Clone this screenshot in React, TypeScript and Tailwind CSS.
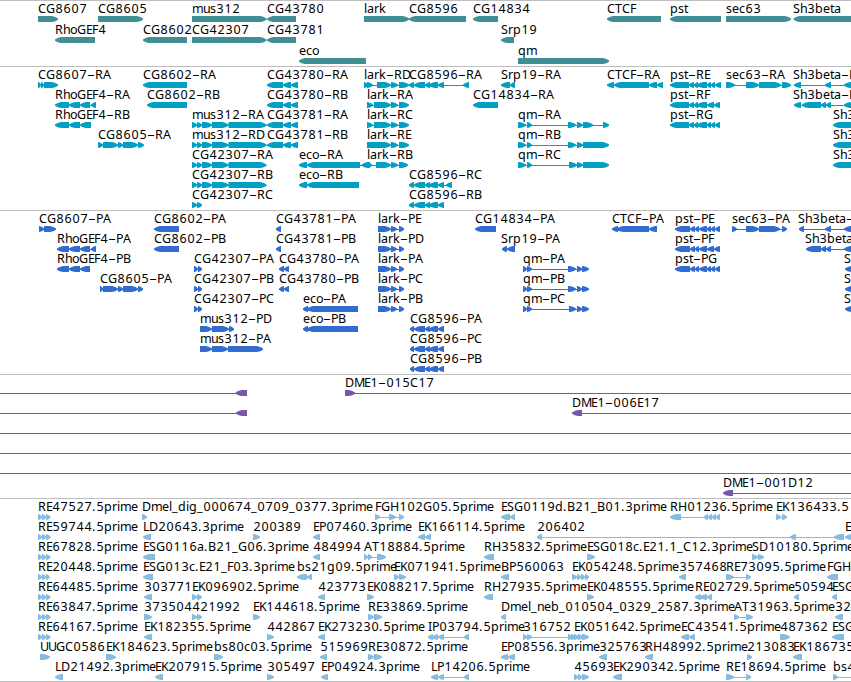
type Dir = '<' | '>';

// [label, label x, strand, exon bounds (start, end, start, end...), line start, line end]
type Feature = [string, number, Dir, number[], number?, number?];

interface TrackData {
    name: string;
    tall?: boolean;
    color: string;
    rows: Feature[][];
}

const VIEW_WIDTH = 851;

const rhoLong = [55, 69, 69, 80, 80, 90, 91, 96];
const cg43780 = [267, 283, 283, 291, 291, 298];
const mus = [192, 197, 197, 202, 202, 212, 212, 228.5, 228.5, 266.5];
const larkTail = [391, 398, 399, 409];
const cg8596 = [409, 414, 414, 425, 425, 430, 429, 438, 438, 444];
const pst = [670, 689, 689, 694, 694, 698, 697, 707, 707, 711, 711, 715, 715, 721];
const pstP = [675, 690, 690, 695, 695, 699, 699, 707, 707, 711, 711, 715, 715, 720];
const larkP = [378, 391, 391, 397, 399, 404];
const cg8596P = [410, 414, 414, 425, 425, 430, 429, 438, 438, 444];
const qmP = [523, 527, 527, 532, 568, 576, 577, 582, 582, 589];
const cg8605 = [103, 118, 118, 123, 123, 138];
const cap = [38, 42, 42, 46, 46, 50.5];

const tracks: TrackData[] = [
    {
        name: 'gene',
        tall: true,
        color: '#3f8f95',
        rows: [
            [
                ['CG8607', 38, '>', [38, 58]],
                ['CG8605', 98, '>', [98, 143]],
                ['mus312', 192, '>', [192, 266.5]],
                ['CG43780', 267, '<', [267, 296]],
                ['lark', 364, '>', [364, 409]],
                ['CG8596', 409, '<', [409, 466]],
                ['CG14834', 473, '<', [473, 498]],
                ['CTCF', 607, '<', [607, 661]],
                ['pst', 670, '<', [670, 721]],
                ['sec63', 726, '>', [726, 791]],
                ['Sh3beta', 793, '<', [793.5, 860]],
            ],
            [
                ['RhoGEF4', 55, '<', [55, 95]],
                ['CG8602', 143, '<', [143, 187]],
                ['CG42307', 192, '>', [192, 266.5]],
                ['CG43781', 267, '<', [267, 296]],
                ['Srp19', 501, '<', [501, 514]],
            ],
            [
                ['eco', 299, '<', [299, 366]],
                ['qm', 518, '>', [518, 609]],
            ],
        ],
    },
    {
        name: 'transcript',
        color: '#009fc3',
        rows: [
            [
                ['CG8607-RA', 38, '>', [38, 41, 41, 44, 44, 58]],
                ['CG8602-RA', 143, '<', [143, 187]],
                ['CG43780-RA', 267, '<', cg43780],
                ['lark-RD', 364, '>', [364, 368, 367, 373, 377, 391, ...larkTail]],
                ['CG8596-RA', 409, '<', [...cg8596, 463, 469]],
                ['Srp19-RA', 501, '<', [501, 510, 510, 515]],
                ['CTCF-RA', 607, '<', [607, 614, 614, 649, 649, 657, 657, 663]],
                ['pst-RE', 670, '<', pst],
                ['sec63-RA', 726, '>', [726, 735, 746, 759, 759, 781, 782, 791]],
                ['Sh3beta-R', 793, '<', [794, 801, 825, 831, 844, 860]],
            ],
            [
                ['RhoGEF4-RA', 55, '<', rhoLong],
                ['CG8602-RB', 147, '<', [147, 187]],
                ['CG43780-RB', 267, '<', cg43780],
                ['lark-RA', 367, '>', [367, 373, 374, 391, ...larkTail]],
                ['CG14834-RA', 473, '<', [473, 498]],
                ['pst-RF', 670, '<', [670, 689, 689, 694, 694, 698, 697, 707, 707, 714, 714, 720]],
                ['Sh3beta-R', 793, '<', [794, 801, 802, 821, 821, 826, 826, 831, 844, 860]],
            ],
            [
                ['RhoGEF4-RB', 55, '<', [55, 69, 69, 80, 80, 91]],
                ['mus312-RA', 192, '>', mus],
                ['CG43781-RA', 267, '<', cg43780],
                ['lark-RC', 367, '>', [367, 373, 374, 391, ...larkTail]],
                ['qm-RA', 518, '>', [518, 526, 527, 532, 568, 576, 577, 583, 583, 593, 603, 609]],
                ['pst-RG', 670, '<', [...pst.slice(0, -1), 720]],
                ['Sh3', 833, '<', [833, 860]],
            ],
            [
                ['CG8605-RA', 98, '>', [98, 103, ...cg8605, 138, 144]],
                ['mus312-RD', 192, '>', mus],
                ['CG43781-RB', 267, '<', cg43780],
                ['lark-RE', 367, '>', [367, 391, ...larkTail]],
                ['qm-RB', 518, '>', [518, 526, 527, 532, 568, 576, 577, 583, 583, 609]],
                ['Sh3', 833, '<', [833, 860]],
            ],
            [
                ['CG42307-RA', 192, '>', mus],
                ['eco-RA', 299, '<', [299, 307, 307, 360, 361.5, 370]],
                ['lark-RB', 367, '>', [367, 372, 376, 391, 391, 398, 399, 408]],
                ['qm-RC', 518, '>', [518, 526, 527, 532, 569, 577, 577, 583, 583, 609]],
                ['Sh3', 833, '<', [833, 860]],
            ],
            [
                ['CG42307-RB', 192, '>', mus],
                ['eco-RB', 299, '<', [299, 307, 307, 359]],
                ['CG8596-RC', 409, '<', [...cg8596, 446, 452]],
            ],
            [
                ['CG42307-RC', 192, '>', [192, 197, 197, 202]],
                ['CG8596-RB', 409, '<', cg8596],
            ],
        ],
    },
    {
        name: 'protein',
        color: '#316cce',
        rows: [
            [
                ['CG8607-PA', 39, '>', [39, 44, 44, 56]],
                ['CG8602-PA', 154, '<', [154, 179]],
                ['CG43781-PA', 276, '<', [276, 281]],
                ['lark-PE', 378, '>', larkP],
                ['CG14834-PA', 475, '<', [475, 496]],
                ['CTCF-PA', 612, '<', [612, 618, 617, 649, 649, 657]],
                ['pst-PE', 675, '<', pstP],
                ['sec63-PA', 732, '>', [732, 737, 746, 759, 759, 780, 782, 787]],
                ['Sh3beta-', 798, '<', [799, 804, 825, 831, 844, 860]],
            ],
            [
                ['RhoGEF4-PA', 57, '<', [57, 69, 69, 80, 80, 90, 91, 96]],
                ['CG8602-PB', 154, '<', [154, 179]],
                ['CG43781-PB', 276, '<', [276, 281]],
                ['lark-PD', 378, '>', larkP],
                ['Srp19-PA', 501, '<', [502, 507, 507, 515]],
                ['pst-PF', 675, '<', [675, 690, 690, 695, 695, 699, 699, 707, 707, 714, 714, 720]],
                ['Sh3beta', 805, '<', [806, 821, 821, 826, 826, 831, 844, 860]],
            ],
            [
                ['RhoGEF4-PB', 57, '<', [57, 69, 69, 80, 80, 90]],
                ['CG42307-PA', 194, '>', [194, 198, 198, 202]],
                ['CG43780-PA', 279, '<', [279, 284, 284, 289]],
                ['lark-PA', 378, '>', larkP],
                ['qm-PA', 523, '>', qmP],
                ['pst-PG', 675, '<', pstP],
                ['S', 844, '<', [845, 860]],
            ],
            [
                ['CG8605-PA', 100, '>', [100, 103, ...cg8605, 138, 143]],
                ['CG42307-PB', 194, '>', [194, 198, 198, 202]],
                ['CG43780-PB', 279, '<', [279, 284, 284, 289]],
                ['lark-PC', 378, '>', larkP],
                ['qm-PB', 523, '>', qmP],
                ['S', 844, '<', [845, 860]],
            ],
            [
                ['CG42307-PC', 194, '>', [194, 198, 198, 202]],
                ['eco-PA', 303, '<', [303, 308, 307, 358]],
                ['lark-PB', 378, '>', larkP],
                ['qm-PC', 523, '>', [523, 527, 527, 532, 569, 576, 577, 582, 582, 589]],
                ['S', 844, '<', [845, 860]],
            ],
            [
                ['mus312-PD', 200, '>', [200, 212, 212, 229, 229, 234]],
                ['eco-PB', 303, '<', [303, 308, 307, 358]],
                ['CG8596-PA', 410, '<', cg8596P],
            ],
            [
                ['mus312-PA', 200, '>', [200, 212, 212, 228, 228, 263]],
                ['CG8596-PC', 410, '<', cg8596P],
            ],
            [['CG8596-PB', 410, '<', cg8596P]],
        ],
    },
    {
        name: 'clone',
        color: '#7559a6',
        rows: [
            [
                ['', 0, '<', [235.5, 247], 0, 247],
                ['DME1-015C17', 345, '>', [345, 355], 345, VIEW_WIDTH],
            ],
            [
                ['', 0, '<', [236, 247], 0, 247],
                ['DME1-006E17', 572, '<', [572, 582], 572, VIEW_WIDTH],
            ],
            [['', 0, '<', [], 0, VIEW_WIDTH]],
            [['', 0, '<', [], 0, VIEW_WIDTH]],
            [['', 0, '<', [], 0, VIEW_WIDTH]],
            [['DME1-001D12', 723, '<', [723, 733], 723, VIEW_WIDTH]],
        ],
    },
    {
        name: 'est',
        color: '#87bcde',
        rows: [
            [
                ['RE47527.5prime', 38, '>', cap],
                ['Dmel_dig_000674_0709_0377.3prime', 142, '>', [142, 147]],
                ['FGH102G05.5prime', 375, '>', [375, 380, 389, 396, 399, 404]],
                ['ESG0119d.B21_B01.3prime', 501, '<', [501, 510, 510, 515]],
                ['RH01236.5prime', 670, '<', [670, 681, 704, 708, 708, 712, 712, 716, 716, 720]],
                ['EK136433.5', 776, '>', [776, 781, 782, 787]],
            ],
            [
                ['RE59744.5prime', 38, '>', cap],
                ['LD20643.3prime', 143, '<', [143, 151]],
                ['200389', 253, '>', [253, 260]],
                ['EP07460.3prime', 313, '<', [313, 320]],
                ['EK166114.5prime', 418, '<', [418, 425, 425, 431]],
                ['206402', 537, '<', [537, 542, 790, 796, 834, 844]],
                ['E', 845, '<', [845, 860]],
            ],
            [
                ['RE67828.5prime', 38, '>', cap],
                ['ESG0116a.B21_G06.3prime', 143, '<', [143, 155]],
                ['484994', 313, '<', [313, 320]],
                ['AT18884.5prime', 364, '>', [364, 368, 368, 372, 377, 386]],
                ['RH35832.5prime', 484, '<', [484, 494]],
                ['ESG018c.E21.1_C12.3prime', 587, '>', [587, 595]],
                ['SD10180.5prime', 752, '>', [752, 758, 758, 764]],
            ],
            [
                ['RE20448.5prime', 38, '>', [38, 42, 42, 46, 46, 49.5]],
                ['ESG013c.E21_F03.3prime', 143, '<', [143, 153]],
                ['bs21g09.5prime', 297, '<', [297, 307, 307, 312]],
                ['EK071941.5prime', 394, '>', [394, 399, 399, 406]],
                ['BP560063', 501, '<', [501, 509]],
                ['EK054248.5prime', 572, '>', [572, 577, 577, 581, 581, 585, 585, 589]],
                ['357468', 679, '<', [679, 686]],
                ['RE73095.5prime', 726, '>', [726, 734, 746, 751]],
                ['FGH', 827, '<', [827, 838]],
            ],
            [
                ['RE64485.5prime', 38, '>', cap],
                ['303771', 144, '<', [144, 152]],
                ['EK096902.5prime', 192, '>', [192, 197, 197, 202]],
                ['423773', 318, '<', [318, 325]],
                ['EK088217.5prime', 367, '>', [367, 374]],
                ['RH27935.5prime', 484, '<', [484, 493]],
                ['EK048555.5prime', 587, '>', [587, 594]],
                ['RE02729.5prime', 695, '<', [695, 701, 700, 707, 707, 712]],
                ['50594', 794, '<', [794, 799]],
                ['ESG', 832, '<', [832, 837]],
            ],
            [
                ['RE63847.5prime', 38, '>', cap],
                ['373504', 144, '>', [144, 152]],
                ['421992', 192, '>', [192, 197, 197, 202]],
                ['EK144618.5prime', 253, '>', [253, 260]],
                ['RE33869.5prime', 368, '>', [368, 374, 374, 382]],
                ['Dmel_neb_010504_0329_2587.3prime', 501, '<', [501, 506]],
                ['AT31963.5prime', 734, '>', [734, 739, 746, 753]],
                ['32', 835, '<', [835, 843]],
            ],
            [
                ['RE64167.5prime', 38, '>', cap],
                ['EK182355.5prime', 144, '<', [144, 152]],
                ['442867', 267, '>', [267, 274]],
                ['EK273230.5prime', 318, '<', [318, 325]],
                ['IP03794.5prime', 428, '<', [428, 433, 432, 438, 438, 444, 464, 469]],
                ['316752', 523, '>', [523, 527, 527, 532, 568, 572, 571, 576]],
                ['EK051642.5prime', 574, '>', [574, 579, 578, 583, 582, 589]],
                ['EC43541.5prime', 681, '<', [681, 689, 689, 695]],
                ['487362', 780, '>', [780, 790]],
                ['ESG', 832, '<', [832, 844]],
            ],
            [
                ['UUGC0586', 40, '>', [40, 50]],
                ['EK184623.5prime', 106, '>', [106, 116]],
                ['bs80c03.5prime', 214, '>', [214, 223]],
                ['515969', 320, '<', [320, 327]],
                ['RE30872.5prime', 368, '>', [368, 374, 374, 382]],
                ['EP08556.3prime', 501, '<', [501, 508, 508, 515]],
                ['325763', 599, '<', [599, 607]],
                ['RH48992.5prime', 645, '<', [645, 653]],
                ['213083', 747, '>', [747, 752]],
                ['EK186735', 793, '<', [793, 802]],
            ],
            [
                ['LD21492.3prime', 55, '<', [55, 63]],
                ['EK207915.5prime', 155, '<', [155, 163]],
                ['305497', 267, '>', [267, 274]],
                ['EP04924.3prime', 321, '<', [321, 328]],
                ['LP14206.5prime', 431, '<', [431, 438, 438, 444, 464, 469]],
                ['45693', 574, '>', [574, 578, 578, 582, 582, 589]],
                ['EK290342.5prime', 613, '<', [613, 622]],
                ['RE18694.5prime', 726, '>', [726, 734, 746, 751]],
                ['bs4', 833, '>', [833, 838], 833, VIEW_WIDTH],
            ],
        ],
    },
];

// Whole-pixel glyph advances; anything not listed is 8px
const advances: Record<string, number> = {
    '.': 4, _: 6, l: 3, i: 3, t: 4, r: 5, s: 6, c: 6, m: 11,
    a: 7, e: 7, h: 7, n: 7, o: 7, u: 7, k: 7,
    E: 6, L: 6, F: 6, I: 4, S: 7, T: 7, P: 7, K: 7,
    G: 9, H: 9, D: 9, M: 10,
};

const Label = ({ text, x }: { text: string; x: number }) => {
    const xs: number[] = [];
    let cursor = x;
    for (const char of text) {
        xs.push(/\d/.test(char) ? cursor + 0.4 : cursor);
        cursor += advances[char] ?? 8;
    }
    const dash = text.indexOf('-');
    if (dash < 0) {
        return <text y={12} x={xs.join(' ')}>{text}</text>;
    }
    // The hyphen is stretched to fill its cell
    return (
        <text y={12}>
            <tspan x={xs.slice(0, dash).join(' ')}>{text.slice(0, dash)}</tspan>
            <tspan x={xs[dash]} textLength={8} lengthAdjust="spacingAndGlyphs">-</tspan>
            <tspan x={xs.slice(dash + 1).join(' ')}>{text.slice(dash + 1)}</tspan>
        </text>
    );
};

// Exon block with a rounded point on the strand side
const exonPath = (start: number, end: number, dir: Dir) => {
    const head = Math.min(6, end - start - 0.5);
    const s = dir === '>' ? 1 : -1;
    const [tail, tip] = dir === '>' ? [start, end] : [end, start];
    const neck = tip - s * head;
    const mid = tip - s * head * 0.45;
    return `M${tail} 0H${neck}L${mid} 1L${tip} 2.5V3.8L${mid} 5.2L${neck} 6H${tail}Z`;
};

const Glyph = ({ feature, color }: { feature: Feature; color: string }) => {
    const [, , dir, bounds, from = bounds[0], to = bounds[bounds.length - 1]] = feature;
    const paths: string[] = [];
    for (let i = 0; i < bounds.length; i += 2) {
        paths.push(exonPath(bounds[i], bounds[i + 1], dir));
    }
    const hasLine = bounds.length !== 2 || feature.length > 4;
    return (
        <g fill={color}>
            {hasLine && <rect x={from} y={18} width={to - from} height={1} />}
            <path transform="translate(0 15)" d={paths.join('')} />
        </g>
    );
};

const Row = ({ features, color, tall }: { features: Feature[]; color: string; tall?: boolean }) => (
    <div className={tall ? 'h-[21px]' : 'h-5'}>
        <svg className="block" width={VIEW_WIDTH} height={21}>
            {features.map((feature, i) => (
                <Glyph key={i} feature={feature} color={color} />
            ))}
            {features.map(([text, x], i) => text && <Label key={i} text={text} x={x} />)}
        </svg>
    </div>
);

const Track = ({ track }: { track: TrackData }) => (
    <section
        className={`border-t border-[#bebebe] ${track.tall || track.name === 'est' ? 'pb-[2px]' : 'pb-[3px]'}`}
    >
        {track.rows.map((features, i) => (
            <Row key={i} features={features} color={track.color} tall={track.tall} />
        ))}
    </section>
);

export default function App() {
    return (
        <main className="h-[682px] w-[851px] overflow-hidden border-b border-[#bebebe] bg-white font-['Noto_Sans',sans-serif] text-[12.5px] text-black">
            {tracks.map((track) => (
                <Track key={track.name} track={track} />
            ))}
        </main>
    );
}
